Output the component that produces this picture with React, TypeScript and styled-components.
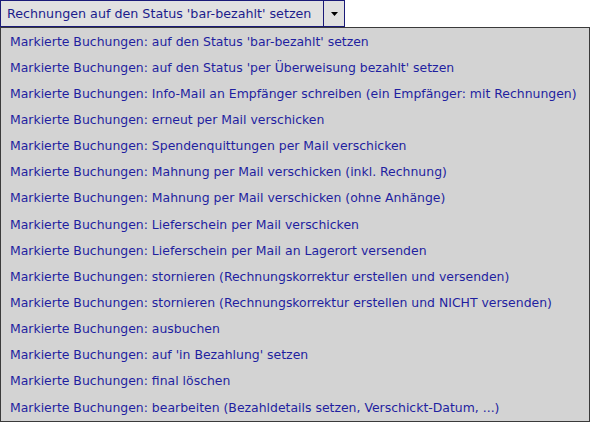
import React from "react";
import styled, { createGlobalStyle } from "styled-components";

const items = [
  "Markierte Buchungen: auf den Status 'bar-bezahlt' setzen",
  "Markierte Buchungen: auf den Status 'per Überweisung bezahlt' setzen",
  "Markierte Buchungen: Info-Mail an Empfänger schreiben (ein Empfänger: mit Rechnungen)",
  "Markierte Buchungen: erneut per Mail verschicken",
  "Markierte Buchungen: Spendenquittungen per Mail verschicken",
  "Markierte Buchungen: Mahnung per Mail verschicken (inkl. Rechnung)",
  "Markierte Buchungen: Mahnung per Mail verschicken (ohne Anhänge)",
  "Markierte Buchungen: Lieferschein per Mail verschicken",
  "Markierte Buchungen: Lieferschein per Mail an Lagerort versenden",
  "Markierte Buchungen: stornieren (Rechnungskorrektur erstellen und versenden)",
  "Markierte Buchungen: stornieren (Rechnungskorrektur erstellen und NICHT versenden)",
  "Markierte Buchungen: ausbuchen",
  "Markierte Buchungen: auf 'in Bezahlung' setzen",
  "Markierte Buchungen: final löschen",
  "Markierte Buchungen: bearbeiten (Bezahldetails setzen, Verschickt-Datum, ...)",
];

const GlobalStyle = createGlobalStyle`
  html, body {
    margin: 0;
    padding: 0;
    background: #ffffff;
  }
  body {
    font-family: "DejaVu Sans", Verdana, sans-serif;
    font-size: 12px;
  }
`;

export default function App() {
  return (
    <>
      <GlobalStyle />
      <Wrapper>
        <SplitButton>
          <MainAction>Rechnungen auf den Status 'bar-bezahlt' setzen</MainAction>
          <Toggle>
            <Caret viewBox="0 0 7 4" width="7" height="4">
              <path d="M0 0 H7 L3.5 4 Z" fill="#000" />
            </Caret>
          </Toggle>
        </SplitButton>
        <Menu>
          {items.map((label) => (
            <MenuItem key={label}>{label}</MenuItem>
          ))}
        </Menu>
      </Wrapper>
    </>
  );
}

const Wrapper = styled.div`
  display: flex;
  flex-direction: column;
  width: 590px;
`;

const SplitButton = styled.div`
  display: flex;
  align-self: flex-start;
  height: 27px;
  box-sizing: border-box;
  border: 1px solid #1a1a78;
  background: #e1e1e1;
`;

const MainAction = styled.div`
  display: flex;
  align-items: center;
  padding: 0 0 0 6px;
  width: 323px;
  box-sizing: border-box;
  color: #1c1c8c;
  font-size: 12.7px;
  white-space: nowrap;
  border-right: 1px solid #1a1a78;
`;

const Toggle = styled.div`
  display: flex;
  align-items: center;
  justify-content: center;
  width: 20px;
`;

const Caret = styled.svg`
  display: block;
`;

const Menu = styled.div`
  display: flex;
  flex-direction: column;
  box-sizing: border-box;
  height: 395px;
  padding: 0;
  border: 1px solid #3a3a3a;
  background: #d3d3d3;
`;

const MenuItem = styled.div`
  height: 26.15px;
  flex: none;
  display: flex;
  align-items: center;
  padding-left: 9px;
  color: #1f1fa0;
  font-size: 12.45px;
  white-space: nowrap;
`;
